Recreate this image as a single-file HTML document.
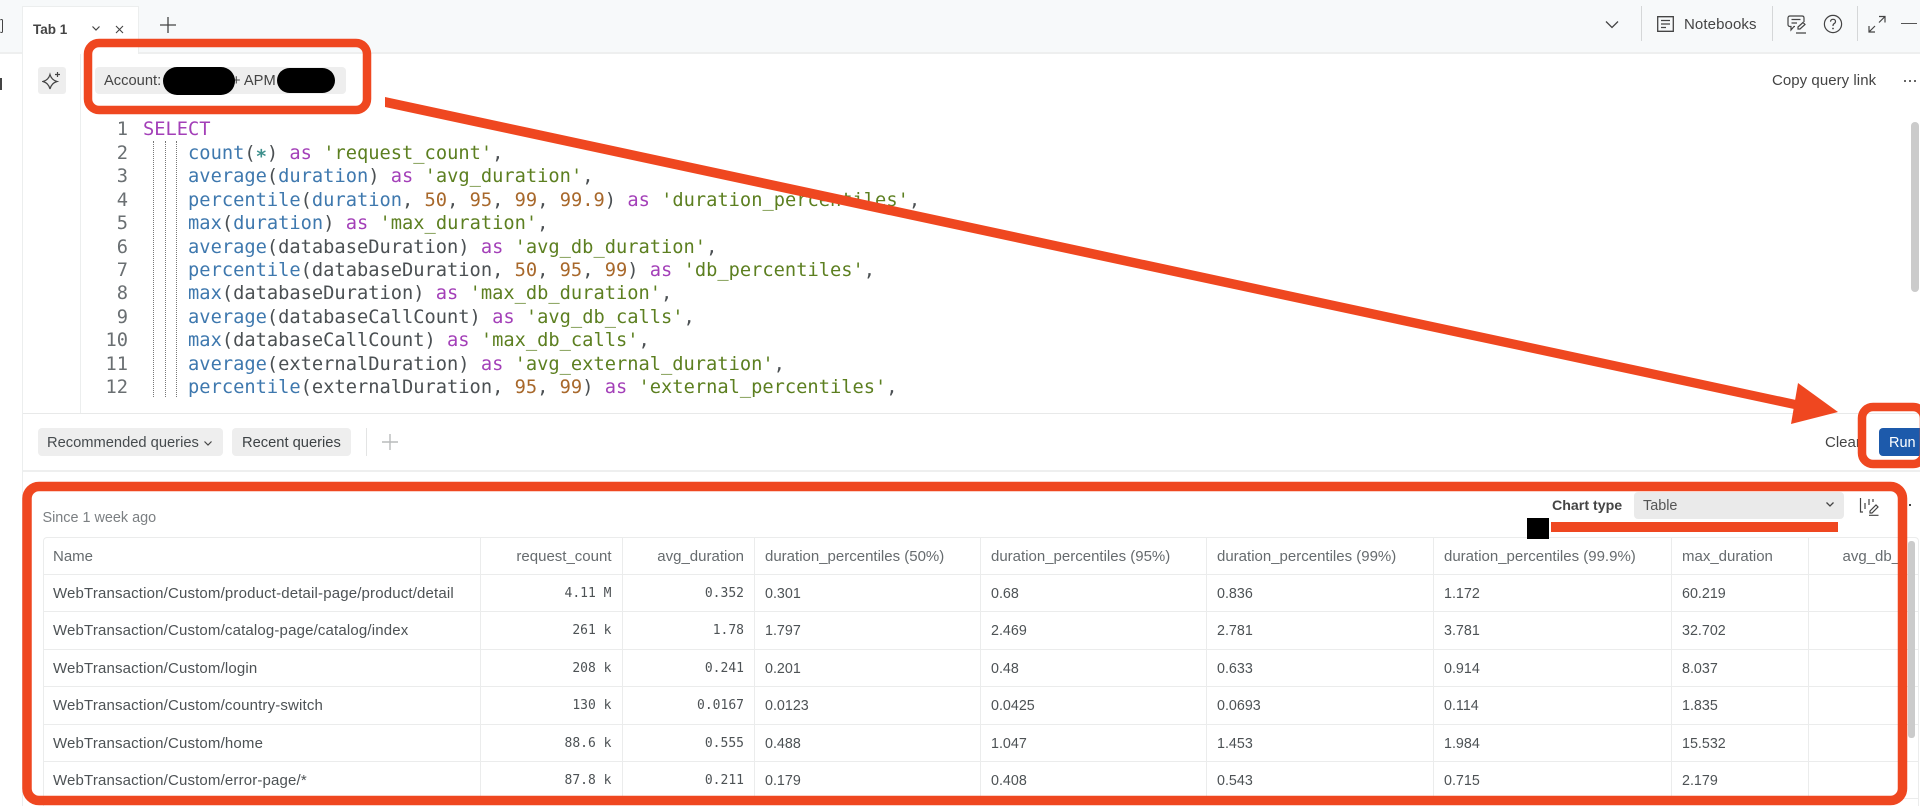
<!DOCTYPE html>
<html><head><meta charset="utf-8">
<style>
html,body{margin:0;padding:0;width:1920px;height:806px;overflow:hidden;background:#fff;font-family:"Liberation Sans",sans-serif;color:#464b4e}
body{filter:blur(.3px)}
.a{position:absolute;white-space:nowrap}
.t{position:absolute;white-space:nowrap;font-size:14.7px;line-height:20px;margin-top:1px}
.code{position:absolute;left:143px;top:118.3px;font-family:"DejaVu Sans Mono",monospace;font-size:18.72px;line-height:23.45px;white-space:pre;color:#4b5053}
.nums{position:absolute;left:96px;width:32px;top:118.3px;text-align:right;font-family:"DejaVu Sans Mono",monospace;font-size:18.72px;line-height:23.45px;color:#6a6f72;white-space:pre}
.k{color:#a33fb8}.f{color:#3e78ae}.s{color:#5c7f20}.n{color:#a8682b}.c{color:#3d8f8c}
.star{font-size:18.72px;font-weight:bold;line-height:0}
.tbl{position:absolute;left:43px;top:537px;width:1876px;height:269px;border:1px solid #ebecec;border-bottom:0;box-sizing:border-box;overflow:hidden;border-radius:4px 4px 0 0}
.r{display:flex;height:37.4px;box-sizing:border-box;border-bottom:1px solid #ebecec;font-size:14.3px;color:#4d5255}
.r.h{height:37px;color:#666b6e;font-size:15px}
.r>div{box-sizing:border-box;padding:0 10px;border-right:1px solid #ebecec;line-height:38px;white-space:nowrap;overflow:hidden;flex:none}
.r>.c1{width:437px;padding-left:9px;font-size:15px;letter-spacing:.16px}
.c2{width:141.5px;text-align:right}.c3{width:132.5px;text-align:right}.c4{width:226px}.c5{width:226px}.c6{width:227px}.c7{width:238px}.c8{width:136.5px}
.r>.c9{width:90px;padding:0 0 0 34px;border-right:0}
.r>.m{font-family:"DejaVu Sans Mono",monospace;font-size:13px;color:#4d5255}
</style></head><body>

<!-- top bar -->
<div class="a" style="left:0;top:0;width:1920px;height:52px;background:#f7f9fa;border-bottom:2px solid #eeefef;box-sizing:content-box"></div>
<div class="a" style="left:0;top:19px;width:3px;height:14px;border:1.5px solid #444;border-left:0;border-radius:2px;box-sizing:border-box"></div>
<div class="a" style="left:0;top:78px;width:2px;height:12px;background:#444"></div>
<div class="a" style="left:22px;top:6px;width:117px;height:48px;background:#fff;border:1px solid #eceeee;border-bottom:0;box-sizing:border-box"></div>
<div class="a" style="left:22px;top:54px;width:1px;height:752px;background:#eceeee"></div>
<div class="t" style="left:33px;top:18.500px;font-weight:bold;font-size:13.5px;color:#444">Tab 1</div>
<svg class="a" style="left:91px;top:25px" width="10" height="8" viewBox="0 0 10 8"><path d="M1.5 1.5 L5 5 L8.5 1.5" fill="none" stroke="#444" stroke-width="1.2"/></svg>
<svg class="a" style="left:115px;top:24.500px" width="9" height="9" viewBox="0 0 9 9"><path d="M1 1 L8 8 M8 1 L1 8" fill="none" stroke="#444" stroke-width="1.1"/></svg>
<svg class="a" style="left:159px;top:16px" width="18" height="18" viewBox="0 0 18 18"><path d="M9 1 V17 M1 9 H17" fill="none" stroke="#444" stroke-width="1.3"/></svg>
<svg class="a" style="left:1604px;top:20px" width="16" height="10" viewBox="0 0 16 10"><path d="M2 1.5 L8 7.5 L14 1.5" fill="none" stroke="#444" stroke-width="1.3"/></svg>
<div class="a" style="left:1641px;top:6px;width:1px;height:35px;background:#d5d7d8"></div>
<svg class="a" style="left:1657px;top:16px" width="17" height="16" viewBox="0 0 17 16"><path d="M.7.7 H16.3 V15.3 H.7 Z M4 4.5 H13 M4 8 H13 M4 11.5 H9" fill="none" stroke="#444" stroke-width="1.3"/></svg>
<div class="t" style="left:1684px;top:13.500px;font-size:15px;letter-spacing:.1px;color:#444">Notebooks</div>
<div class="a" style="left:1772px;top:6px;width:1px;height:35px;background:#d5d7d8"></div>
<svg class="a" style="left:1787px;top:15px" width="20" height="19" viewBox="0 0 20 19"><path d="M3 1 H15 Q17 1 17 3 V7 M8 11.5 H7 L4 15 V11.5 H3 Q1 11.5 1 9.5 V3 Q1 1 3 1 M4.5 4.5 H13.5 M4.5 8 H10 M11 12 L16 7.5 L18 9.5 L13 14 L11 14 Z M9 18 H19" fill="none" stroke="#444" stroke-width="1.2"/></svg>
<svg class="a" style="left:1823px;top:14px" width="20" height="20" viewBox="0 0 20 20"><circle cx="10" cy="10" r="8.6" fill="none" stroke="#444" stroke-width="1.2"/><path d="M7.5 7.7 Q7.7 5.3 10 5.3 Q12.5 5.3 12.5 7.5 Q12.5 9 10.9 9.8 Q10 10.3 10 12" fill="none" stroke="#444" stroke-width="1.2"/><circle cx="10" cy="14.5" r=".9" fill="#444"/></svg>
<div class="a" style="left:1857px;top:6px;width:1px;height:35px;background:#d5d7d8"></div>
<svg class="a" style="left:1868px;top:15px" width="18" height="18" viewBox="0 0 18 18"><path d="M11 1.5 H17 V7.5 M17 1.5 L11 7.5 M1 11 V17 H7 M1 17 L7 11" fill="none" stroke="#444" stroke-width="1.2"/></svg>
<div class="a" style="left:1901px;top:23px;width:16px;height:1px;background:#555"></div>

<!-- query bar -->
<div class="a" style="left:37.5px;top:67px;width:28px;height:27px;background:#eeeeee;border-radius:3px"></div>
<svg class="a" style="left:42px;top:71px" width="20" height="20" viewBox="0 0 20 20"><path d="M8 3.5 Q9.5 9 15 10.5 Q9.5 12 8 18 Q6.5 12 1 10.5 Q6.5 9 8 3.5 Z M15.5 1 V6 M13 3.5 H18" fill="none" stroke="#444" stroke-width="1.2"/></svg>
<div class="a" style="left:80px;top:54px;width:1px;height:359px;background:#eceeee"></div>
<div class="a" style="left:95px;top:67px;width:251px;height:27px;background:#eeeeee;border-radius:4px"></div>
<div class="t" style="left:104px;top:70px;color:#444">Account:</div>
<div class="t" style="left:232px;top:70px;color:#444">+ APM</div>
<div class="a" style="left:163px;top:67px;width:72px;height:28px;background:#000;border-radius:14px"></div>
<div class="a" style="left:277px;top:68px;width:58px;height:25px;background:#000;border-radius:13px"></div>
<div class="t" style="left:1772px;top:70px;color:#444;font-size:15px;letter-spacing:.05px">Copy query link</div>
<div class="a" style="left:1904px;top:79.500px;width:2px;height:2px;background:#666;box-shadow:5px 0 #666,10px 0 #666"></div>
<div class="a" style="left:1911px;top:122px;width:8px;height:170px;background:#cbcbcb;border-radius:4px"></div>

<!-- code -->
<div class="nums">1
2
3
4
5
6
7
8
9
10
11
12</div>
<div class="a" style="left:153px;top:141px;height:256px;border-left:1px dotted #777"></div>
<div class="a" style="left:165px;top:141px;height:256px;border-left:1px dotted #777"></div>
<div class="a" style="left:176px;top:141px;height:256px;border-left:1px dotted #777"></div>
<div class="code"><span class="k">SELECT</span>
    <span class="f">count</span>(<span class="c star">∗</span>) <span class="k">as</span> <span class="s">'request_count'</span>,
    <span class="f">average</span>(<span class="f">duration</span>) <span class="k">as</span> <span class="s">'avg_duration'</span>,
    <span class="f">percentile</span>(<span class="f">duration</span>, <span class="n">50</span>, <span class="n">95</span>, <span class="n">99</span>, <span class="n">99.9</span>) <span class="k">as</span> <span class="s">'duration_percentiles'</span>,
    <span class="f">max</span>(<span class="f">duration</span>) <span class="k">as</span> <span class="s">'max_duration'</span>,
    <span class="f">average</span>(databaseDuration) <span class="k">as</span> <span class="s">'avg_db_duration'</span>,
    <span class="f">percentile</span>(databaseDuration, <span class="n">50</span>, <span class="n">95</span>, <span class="n">99</span>) <span class="k">as</span> <span class="s">'db_percentiles'</span>,
    <span class="f">max</span>(databaseDuration) <span class="k">as</span> <span class="s">'max_db_duration'</span>,
    <span class="f">average</span>(databaseCallCount) <span class="k">as</span> <span class="s">'avg_db_calls'</span>,
    <span class="f">max</span>(databaseCallCount) <span class="k">as</span> <span class="s">'max_db_calls'</span>,
    <span class="f">average</span>(externalDuration) <span class="k">as</span> <span class="s">'avg_external_duration'</span>,
    <span class="f">percentile</span>(externalDuration, <span class="n">95</span>, <span class="n">99</span>) <span class="k">as</span> <span class="s">'external_percentiles'</span>,</div>

<!-- toolbar -->
<div class="a" style="left:23px;top:413px;width:1897px;height:1px;background:#e8e9e9"></div>
<div class="a" style="left:23px;top:470px;width:1897px;height:2px;background:#eeefef"></div>
<div class="a" style="left:37.5px;top:428px;width:185px;height:28px;background:#eeeeee;border-radius:4px"></div>
<div class="t" style="left:47px;top:432px;color:#464b4e">Recommended queries</div>
<svg class="a" style="left:203px;top:440px" width="10" height="7" viewBox="0 0 10 7"><path d="M1.5 1.5 L5 5 L8.5 1.5" fill="none" stroke="#444" stroke-width="1.2"/></svg>
<div class="a" style="left:232px;top:428px;width:119px;height:28px;background:#eeeeee;border-radius:4px"></div>
<div class="t" style="left:242px;top:432px;color:#3d4245">Recent queries</div>
<div class="a" style="left:366px;top:428px;width:1px;height:28px;background:#e3e4e4"></div>
<svg class="a" style="left:381px;top:433px" width="18" height="18" viewBox="0 0 18 18"><path d="M9 1 V17 M1 9 H17" fill="none" stroke="#b9bbbc" stroke-width="1.4"/></svg>
<div class="t" style="left:1825px;top:432px;font-size:15px;color:#444">Clear</div>
<div class="a" style="left:1879px;top:428px;width:41px;height:28px;background:#1d5aab;border-radius:4px 0 0 4px"></div>
<div class="t" style="left:1889px;top:432px;font-size:14.5px;color:#fff">Run</div>

<!-- results -->
<div class="t" style="left:42.500px;top:507px;font-size:14.4px;color:#7b7f82">Since 1 week ago</div>
<div class="t" style="left:1552px;top:495px;font-weight:bold;font-size:14.2px;color:#444">Chart type</div>
<div class="a" style="left:1633.5px;top:492px;width:210.5px;height:27px;background:#eaeaea;border-radius:4px"></div>
<div class="t" style="left:1643px;top:495px;font-size:14.4px;color:#555">Table</div>
<svg class="a" style="left:1825px;top:501px" width="10" height="7" viewBox="0 0 10 7"><path d="M1.5 1.5 L5 5 L8.5 1.5" fill="none" stroke="#444" stroke-width="1.3"/></svg>
<svg class="a" style="left:1859px;top:497px" width="20" height="19" viewBox="0 0 20 19"><path d="M1.5 1 V15 H4 M6 6 V12 M10 2 V8 M14 2 V5 M11 14 L17 8 L19 10 L13 16 L11 16 Z M10 18.3 H19.5" fill="none" stroke="#444" stroke-width="1.2"/></svg>
<div class="a" style="left:1909px;top:504px;width:2px;height:2px;background:#444"></div>

<div class="tbl">
<div class="r h"><div class="c1" style="letter-spacing:0">Name</div><div class="c2">request_count</div><div class="c3">avg_duration</div><div class="c4">duration_percentiles (50%)</div><div class="c5">duration_percentiles (95%)</div><div class="c6">duration_percentiles (99%)</div><div class="c7">duration_percentiles (99.9%)</div><div class="c8">max_duration</div><div class="c9">avg_db_duration</div></div>
<div class="r"><div class="c1">WebTransaction/Custom/product-detail-page/product/detail</div><div class="c2 m">4.11 M</div><div class="c3 m">0.352</div><div class="c4">0.301</div><div class="c5">0.68</div><div class="c6">0.836</div><div class="c7">1.172</div><div class="c8">60.219</div><div class="c9"></div></div>
<div class="r"><div class="c1">WebTransaction/Custom/catalog-page/catalog/index</div><div class="c2 m">261 k</div><div class="c3 m">1.78</div><div class="c4">1.797</div><div class="c5">2.469</div><div class="c6">2.781</div><div class="c7">3.781</div><div class="c8">32.702</div><div class="c9"></div></div>
<div class="r"><div class="c1">WebTransaction/Custom/login</div><div class="c2 m">208 k</div><div class="c3 m">0.241</div><div class="c4">0.201</div><div class="c5">0.48</div><div class="c6">0.633</div><div class="c7">0.914</div><div class="c8">8.037</div><div class="c9"></div></div>
<div class="r"><div class="c1">WebTransaction/Custom/country-switch</div><div class="c2 m">130 k</div><div class="c3 m">0.0167</div><div class="c4">0.0123</div><div class="c5">0.0425</div><div class="c6">0.0693</div><div class="c7">0.114</div><div class="c8">1.835</div><div class="c9"></div></div>
<div class="r"><div class="c1">WebTransaction/Custom/home</div><div class="c2 m">88.6 k</div><div class="c3 m">0.555</div><div class="c4">0.488</div><div class="c5">1.047</div><div class="c6">1.453</div><div class="c7">1.984</div><div class="c8">15.532</div><div class="c9"></div></div>
<div class="r"><div class="c1">WebTransaction/Custom/error-page/*</div><div class="c2 m">87.8 k</div><div class="c3 m">0.211</div><div class="c4">0.179</div><div class="c5">0.408</div><div class="c6">0.543</div><div class="c7">0.715</div><div class="c8">2.179</div><div class="c9"></div></div>
</div>
<div class="a" style="left:1908px;top:541px;width:7px;height:197px;background:#cbcbcb;border-radius:3px"></div>

<!-- annotations -->
<svg class="a" style="left:0;top:0" width="1920" height="806" viewBox="0 0 1920 806">
<rect x="88" y="43" width="279" height="67" rx="11" fill="none" stroke="#ef4720" stroke-width="8.5"/>
<rect x="1862" y="407" width="62" height="57" rx="11" fill="none" stroke="#ef4720" stroke-width="8.5"/>
<rect x="27" y="486.500" width="1875.500" height="314" rx="12" fill="none" stroke="#ef4720" stroke-width="9.5"/>
<polygon points="385,97 1796,400 1794,409 385,107" fill="#ef4720"/>
<polygon points="1798,383 1838,412 1791,424" fill="#ef4720"/>
<rect x="1527" y="518" width="22" height="21" fill="#000"/>
<rect x="1551" y="522" width="287" height="10" fill="#ef4720"/>
</svg>
</body></html>
